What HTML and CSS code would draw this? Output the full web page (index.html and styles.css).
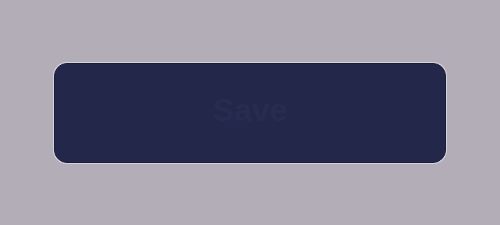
FILE: index.html
```html
<!DOCTYPE html>
<html>
<head>
<meta charset="utf-8">
<link rel="stylesheet" href="styles.css">
</head>
<body>
<main class="stage">
  <button class="btn" type="button"><span class="label">Save</span></button>
</main>
</body>
</html>
```
FILE: styles.css
```css
html, body {
  margin: 0;
  padding: 0;
  width: 500px;
  height: 225px;
  background: #b3adb8;
  overflow: hidden;
}
.stage {
  width: 500px;
  height: 225px;
  display: flex;
  align-items: center;
  justify-content: center;
}
.btn {
  width: 392px;
  height: 100px;
  box-sizing: border-box;
  border-radius: 13px;
  background: #23284b;
  border: 1px solid #1a1d3c;
  box-shadow: 0 0 0 1px #d6d2dc;
  display: flex;
  align-items: center;
  justify-content: center;
  padding: 0 0 4px 0;
  cursor: pointer;
}
.label {
  font-family: "Liberation Sans", Arial, sans-serif;
  font-size: 32px;
  font-weight: 700;
  color: #272c50;
}
```
